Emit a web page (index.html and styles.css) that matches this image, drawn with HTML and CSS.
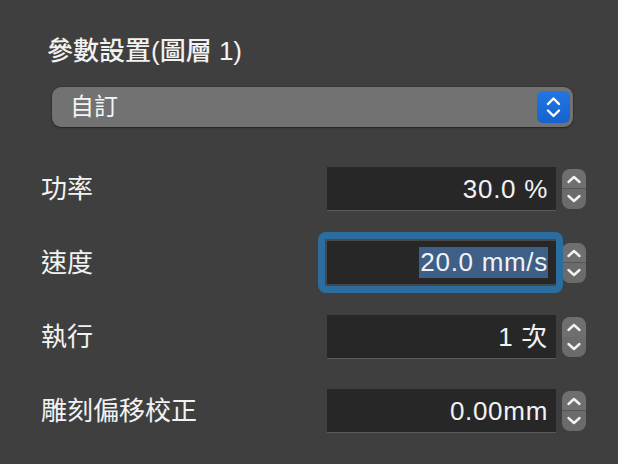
FILE: index.html
```html
<!DOCTYPE html>
<html lang="zh-Hant">
<head>
    <meta charset="UTF-8">
    <meta name="viewport" content="width=device-width, initial-scale=1.0">
    <title>參數設置</title>
    <link rel="stylesheet" href="styles.css">
</head>
<body>
    <div class="panel">
        <h2 class="title">參數設置(圖層 1)</h2>

        <div class="popup">
            <span class="popup-text">自訂</span>
            <span class="popup-btn">
                <svg width="33" height="32" viewBox="0 0 33 32">
                    <path d="M11 13 L16.5 7.5 L22 13 M11 19.5 L16.5 25 L22 19.5" fill="none" stroke="#fff" stroke-width="2.4" stroke-linecap="round" stroke-linejoin="round"/>
                </svg>
            </span>
        </div>

        <div class="rows">
            <div class="row">
                <span class="label">功率</span>
                <div class="field">30.0 %</div>
                <div class="stepper">
                    <svg width="24" height="40" viewBox="0 0 24 40">
                        <path d="M6.5 13 L12 8 L17.5 13 M6.5 27 L12 32 L17.5 27" fill="none" stroke="#f2f2f2" stroke-width="2.4" stroke-linecap="round" stroke-linejoin="round"/>
                    </svg>
                </div>
            </div>
            <div class="row">
                <span class="label">速度</span>
                <div class="field focused"><span class="selected">20.0 mm/s</span></div>
                <div class="stepper">
                    <svg width="24" height="40" viewBox="0 0 24 40">
                        <path d="M6.5 13 L12 8 L17.5 13 M6.5 27 L12 32 L17.5 27" fill="none" stroke="#f2f2f2" stroke-width="2.4" stroke-linecap="round" stroke-linejoin="round"/>
                    </svg>
                </div>
            </div>
            <div class="row">
                <span class="label">執行</span>
                <div class="field">1 次</div>
                <div class="stepper">
                    <svg width="24" height="40" viewBox="0 0 24 40">
                        <path d="M6.5 13 L12 8 L17.5 13 M6.5 27 L12 32 L17.5 27" fill="none" stroke="#f2f2f2" stroke-width="2.4" stroke-linecap="round" stroke-linejoin="round"/>
                    </svg>
                </div>
            </div>
            <div class="row">
                <span class="label">雕刻偏移校正</span>
                <div class="field">0.00mm</div>
                <div class="stepper">
                    <svg width="24" height="40" viewBox="0 0 24 40">
                        <path d="M6.5 13 L12 8 L17.5 13 M6.5 27 L12 32 L17.5 27" fill="none" stroke="#f2f2f2" stroke-width="2.4" stroke-linecap="round" stroke-linejoin="round"/>
                    </svg>
                </div>
            </div>
        </div>
    </div>
</body>
</html>
```

FILE: styles.css
```css
* { margin: 0; padding: 0; box-sizing: border-box; }
html, body { height: 100%; }
body {
    background: #3f3f3f;
    color: #f2f2f2;
    font-family: "Liberation Sans", "Noto Sans CJK TC", sans-serif;
    font-size: 26px;
}
.panel { padding-top: 36px; }

.title {
    font-size: 26px; font-weight: 500;
    line-height: 30px; padding-left: 47px;
}

.popup {
    display: flex; align-items: center; justify-content: space-between;
    margin: 21px 45px 0 52px; height: 40px;
    padding: 0 3px 0 18px;
    background: #727272; border-radius: 9px;
    box-shadow: 0 0 0 1px rgba(0, 0, 0, 0.12), 0 1px 2px rgba(0, 0, 0, 0.35);
}
.popup-text { font-size: 24px; line-height: 1; color: #f4f4f4; }
.popup-btn {
    display: flex; width: 33px; height: 32px; border-radius: 6px;
    background: linear-gradient(#2176e4, #1563cf);
}

.rows {
    display: flex; flex-direction: column; gap: 30px;
    margin-top: 40px;
}
.row {
    display: flex; align-items: center;
    height: 44px; padding: 0 32px 0 41px;
}
.label { flex: 1; line-height: 1; }
.field {
    position: relative;
    width: 229px; height: 44px; margin-right: 6px;
    display: flex; align-items: center; justify-content: flex-end;
    padding-right: 8px;
    background: #272727;
    border-bottom: 1px solid #5b5b5b;
    line-height: 1;
    letter-spacing: 0.7px;
    white-space: nowrap;
}
.field.focused::before {
    content: ""; position: absolute;
    inset: -9px -7px -9px -9px;
    border: 7px solid #2b6d9f; border-radius: 8px;
}
.field.focused::after {
    content: ""; position: absolute;
    inset: -2px 0 -2px -2px;
    border: 2px solid #474747; border-right: none;
}
.selected {
    background: #3e5f87;
    line-height: 31px; padding-left: 1px;
}
.stepper {
    width: 24px; height: 40px; border-radius: 8px;
    background: linear-gradient(#6f6f6f 0, #6f6f6f 19.5px, #565656 19.5px, #565656 20.5px, #6b6b6b 20.5px);
    display: flex;
}
```
